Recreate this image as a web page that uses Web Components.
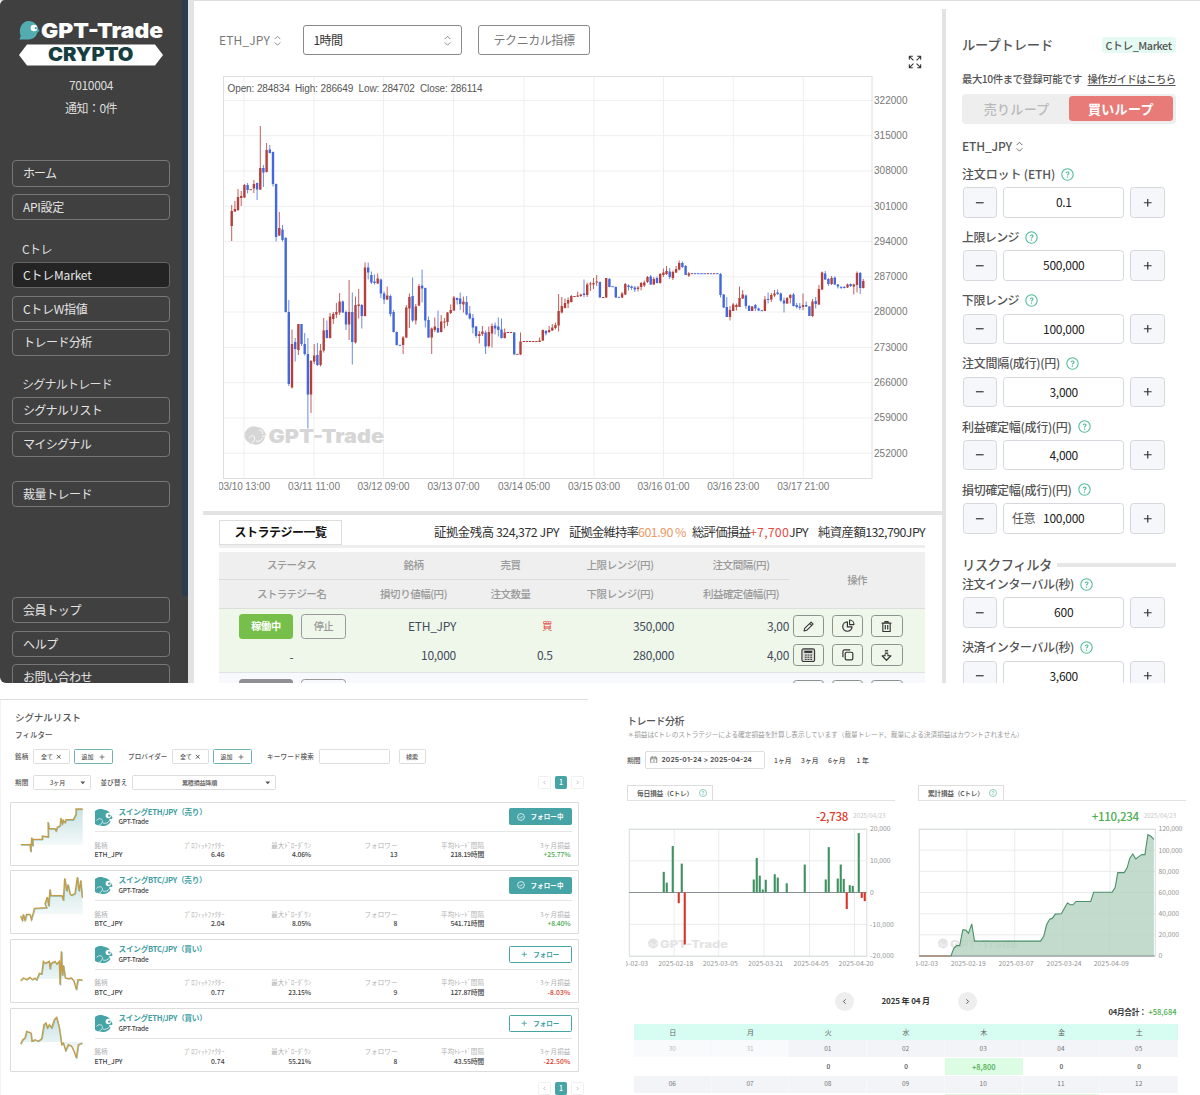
<!DOCTYPE html>
<html lang="ja">
<head>
<meta charset="utf-8">
<title>GPT-Trade CRYPTO</title>
<style>
  html, body { margin: 0; background: #fff; }
  body {
    width: 1200px; height: 1095px; overflow: hidden;
    font-family: "Noto Sans CJK JP", "Noto Sans", sans-serif;
    font-size: 12px; line-height: 1.2; color: #555;
    --teal: #46a3a6; --rule: #e3e3e3; --up: #4cae4f; --down: #dc3a2b;
  }
</style>
</head>
<body>
<gpt-page></gpt-page>

<script>
// ── Base ───────────────────────────────────────────────────────────
class Part extends HTMLElement {
  constructor() {
    super();
    this.attachShadow({ mode: 'open' });
  }
  connectedCallback() {
    this.shadowRoot.innerHTML = `<style>${this.css()}</style>${this.html()}`;
  }
  css() { return ''; }
  html() { return '<slot></slot>'; }
  a(name, fallback = '') { return this.getAttribute(name) ?? fallback; }
}

// ── <fit-text w="80"> · spreads its letters over a given width ──────
class FitText extends Part {
  css() { return ':host { display: inline-block; flex: none; white-space: pre; }'; }
  connectedCallback() {
    super.connectedCallback();
    const w = parseFloat(this.a('w'));
    const n = [...this.textContent].length;
    if (!w || !n) return;
    this.style.letterSpacing = '0';
    const natural = this.getBoundingClientRect().width;
    this.style.letterSpacing = `${((w - natural) / n).toFixed(3)}px`;
  }
}

// ── <gpt-whale> · round brand mark ─────────────────────────────────
class GptWhale extends Part {
  css() { return ':host { display: block; flex: none; } svg { display: block; width: 100%; height: 100%; }'; }
  html() {
    return `<svg viewBox="0 0 20 20">
      <path d="M10 .8a9.200 9.200 0 0 1 7.600 5.700l2 3.500-1.400 1.600A9.200 9.200 0 0 1 7 18.600l-4.800-.8A9.200 9.200 0 0 1 10 .8z" fill="${this.a('color', '#46a3a6')}"/>
      <circle cx="14.800" cy="7.300" r="3" fill="#fff"/><circle cx="15.800" cy="7.300" r="1.300" fill="#46a3a6"/>
      <circle cx="17.300" cy="12.300" r="1.600" fill="#fff"/>
      ${this.hasAttribute('tail') ? `<path d="M1.600 12.800c2-2.600 5.800-2.700 6.600-.2.7 2.400-1.100 4-3.400 5.200M8.800 15.600c2.700.9 5.700-.2 7-2.300" fill="none" stroke="#fff" stroke-width=".8"/>` : ''}
    </svg>`;
  }
}

// ── <gpt-icon name> ────────────────────────────────────────────────
const ICONS = {
  sort: '<path d="M5 6.500 8 3.500l3 3M5 10l3 3 3-3" stroke-width=".9"/>',
  help: '<circle cx="8" cy="8" r="7" stroke-width="1.300"/><path d="M6.300 6.600c0-2.300 3.500-2.300 3.500-.2 0 1.300-1.800 1.300-1.800 2.700" stroke-width="1.300"/><circle cx="8" cy="11.200" r=".5"/>',
  full: '<path d="M1.500 5.500v-4h4M1.500 1.500l4.700 4.700M10.500 1.500h4v4M14.500 1.500 9.800 6.200M1.500 10.500v4h4M1.500 14.500l4.700-4.700M14.500 10.500v4h-4M14.500 14.500l-4.700-4.700" stroke-width="1.200"/>',
  pen: '<path d="m2.500 13.500.8-3.300 7.900-7.700 2.500 2.500-7.900 7.700zM9.400 4.300l2.400 2.400" stroke-width="1.300"/>',
  pie: '<path d="M7.300 3.400A5.300 5.300 0 1 0 12.600 9H7.300z" stroke-width="1.400"/><path d="M9.800 1.200v5.200h5a5.200 5.200 0 0 0-5-5.200z" stroke-width="1.200"/>',
  bin: '<path d="M2 3.800h12M6 3.500V2h4v1.500M3.500 3.800v10.400h9V3.800M6.500 6.200v5.500M9.500 6.200v5.500" stroke-width="1.400"/>',
  calc: '<rect x="1" y="1" width="14" height="14" rx="2" fill="#d4d8d4" stroke-width="1.200"/><rect x="3.600" y="3" width="8.800" height="2.400" fill="currentColor" stroke="none"/><path d="M4.300 7.800h2M7.200 7.800h2M10.200 7.800h2M4.300 10.200h2M7.200 10.200h2M10.200 10.200h2M4.300 12.600h2M7.200 12.600h2M10.200 12.600h2" stroke-width="1.100"/>',
  copy: '<rect x="5" y="5" width="9" height="9" rx="1.500" stroke-width="1.400"/><path d="M11 2.300H4A1.700 1.700 0 0 0 2.300 4v7" stroke-width="1.400"/>',
  down: '<path d="M6.200 6.500v1.800H2.600L8 14l5.400-5.700H9.800V6.500" stroke-width="1.500"/><path d="M6 1.800h4M6 3.700h4M6 5.600h4" stroke-width="1.100"/>',
  check: '<circle cx="8" cy="8" r="6.800" stroke-width="1.500"/><path d="m5 8 2.200 2.300 4-4.200" stroke-width="1.500"/>',
  plus: '<path d="M8 1.500v13M1.500 8h13" stroke-width="2"/>',
  minus: '<path d="M1.500 8h13" stroke-width="2"/>',
  cross: '<path d="m2.500 2.500 11 11M13.500 2.500l-11 11" stroke-width="2.800"/>',
  left: '<path d="m10.500 3-5 5 5 5" stroke-width="1.800"/>',
  right: '<path d="m5.500 3 5 5-5 5" stroke-width="1.800"/>',
  caret: '<path d="M1 4.500h14l-7 8z" fill="currentColor" stroke="none"/>',
  cal: '<rect x="1.500" y="2.500" width="13" height="12.500" rx="1.500" stroke-width="1.400"/><path d="M1.500 6h13M5 .8v3M11 .8v3M8.500 8v5" stroke-width="1.400"/>',
};
class GptIcon extends Part {
  css() {
    const s = this.a('size', 14);
    return `:host { display: block; flex: none; width: ${s}px; height: ${s}px; } svg { display: block; width: 100%; height: 100%; }`;
  }
  html() {
    return `<svg viewBox="0 0 16 16" fill="none" stroke="currentColor" stroke-linejoin="round">${ICONS[this.a('name')]}</svg>`;
  }
}

// ── Sidebar ────────────────────────────────────────────────────────
class NavItem extends Part {
  css() {
    return `
      :host { display: flex; align-items: center; box-sizing: border-box; height: 26.4px; margin: 0 0 7.3px 12px; width: 158px;
        padding-left: 10px; border: 1px solid #777; border-radius: 4px; color: #e4e4e4; font-size: 12px; }
      :host([active]) { background: #242424; border-color: #666; }`;
  }
}
class NavHeading extends Part {
  css() { return ':host { display: flex; align-items: flex-end; height: 28.300px; padding: 0 0 6px 22px; color: #ddd; font-size: 12px; }'; }
}
class GptSidebar extends Part {
  css() {
    return `
      :host { display: flex; width: 188px; flex: none; background: #404040; overflow: hidden; border-radius: 5px 0 0 6px; }
      nav { width: 182px; flex: none; }
      .thumb { width: 6px; height: 596px; background: #2d3b4e; }
      .logo { display: block; width: 182px; height: 50px; padding-top: 18px; }
      .user { box-sizing: border-box; display: flex; flex-direction: column; align-items: center; width: 182px; height: 92.300px; padding-top: 6px; color: #ddd; line-height: 22.800px; }
      .gap { height: 16.400px; } .gap.big { height: 82.200px; }`;
  }
  html() {
    return `<nav>
      <svg class="logo" viewBox="0 18 182 50">
        <path d="M28.500 21c6 0 9 4.500 9.500 7.500l1.500 2.300-2 1.800c-1.500 5-6 7.400-10 6.800l-8 .1 1.200-3.500C18 28 22.500 21 28.500 21z" fill="#52acb0"/>
        <circle cx="34" cy="28" r="3.300" fill="#fff"/><circle cx="35.800" cy="28.200" r="1.100" fill="#46a3a6"/>
        <text x="41" y="38" font-family="Inter, sans-serif" font-weight="900" font-size="20.800" fill="#fff" textLength="122" lengthAdjust="spacingAndGlyphs">GPT-Trade</text>
        <path d="M27 44.500h128l8 10.500-8 10.500H27L19 55z" fill="#fff"/>
        <text x="48" y="61" font-family="Inter, sans-serif" font-weight="900" font-size="18.500" fill="#173f42" textLength="85.500" lengthAdjust="spacingAndGlyphs">CRYPTO</text>
      </svg>
      <div class="user"><fit-text w="44">7010004</fit-text><fit-text w="52">通知：0件</fit-text></div>
      <nav-item><fit-text w="33">ホーム</fit-text></nav-item>
      <nav-item><fit-text w="41">API設定</fit-text></nav-item>
      <nav-heading><fit-text w="30">Cトレ</fit-text></nav-heading>
      <nav-item active><fit-text w="68.500">CトレMarket</fit-text></nav-item>
      <nav-item><fit-text w="64.500">CトレW指値</fit-text></nav-item>
      <nav-item><fit-text w="69">トレード分析</fit-text></nav-item>
      <nav-heading><fit-text w="90">シグナルトレード</fit-text></nav-heading>
      <nav-item><fit-text w="79">シグナルリスト</fit-text></nav-item>
      <nav-item><fit-text w="68">マイシグナル</fit-text></nav-item>
      <div class="gap"></div>
      <nav-item><fit-text w="69">裁量トレード</fit-text></nav-item>
      <div class="gap big"></div>
      <nav-item><fit-text w="58">会員トップ</fit-text></nav-item>
      <nav-item><fit-text w="35">ヘルプ</fit-text></nav-item>
      <nav-item><fit-text w="69">お問い合わせ</fit-text></nav-item>
    </nav><div class="thumb"></div>`;
  }
}

// ── <candle-chart> ─────────────────────────────────────────────────
// One candle per hour: side, high, body top, body bottom, low. A side with a
// single number is a flat hour.
const CANDLES = `r 205 211 226 241|r 201 209 211.5 212|r 189 197 210 211|r 191 196 198 206|r 184 185 197.5 198|b 183 185 190 193.5|r 189.700|r 180 184 188.5 193|b 182.5 183 189.5 200|r 126 168 189.5 190|b 165 168 172.5 187|r 143 150 172 172.5|b 145 149.5 153 153.5|b 151.5 152 184 186.5|b 183.5 184 237 241.5|r 212 228 235.5 236|b 225 229.5 240 241.5|b 237 238 312 312.5|b 300 312 384 386|r 329.5 344 387.5 388.5|b 338 342 349 361.5|r 324 324 350 355|b 324 324 344 346|b 333 344 354 355.5|b 338 354 394.5 428.5|r 360 361 394.5 413|r 344 355.5 361.5 364|b 343 355 365 366|r 344 350.5 365 366.5|r 318 330.5 350.5 352.5|b 320.5 330 338 338.5|r 313 316.5 338 338.5|r 312 314 319 324|r 303 312 314.5 318|r 293 301.5 312.5 315|b 300.5 301.5 312.5 313|b 310.5 312 324.5 330|r 280 312 324.5 340|b 292.5 312 342 364.5|r 296.5 305 342.5 343.5|r 289 304.5 306 318.5|b 304 305 316 328.5|r 262.5 267.5 316 316.5|b 262.5 267.5 272.5 279.5|b 271.5 275 282.5 284|b 274.5 281.5 283 284.5|r 273.5 278.5 283.5 284|b 278.5 279.5 293.5 298|b 291.5 293.5 299.5 304|r 286.5 295.5 299.5 300|b 294.5 296 314 316.5|b 310 312 332 332.5|b 331.5 332 345 345.5|b 345.300|r 336 337.5 345 354|r 305 307.5 337.5 338|r 293.5 297 308.5 328|b 277.5 296 320.5 322|r 304 306.5 320.5 324.5|r 284 286 305.5 306|b 269.5 285.5 288.5 302.5|b 287.5 288 320.5 327.5|b 316.5 320 337.5 338|r 327.5 328.5 337.5 354|r 317.5 326.5 330 332|b 310.5 328 332.5 332.5|r 315 321.5 332 332.5|r 318 321.5 322.5 328.5|r 312 312.5 322 326|r 304.5 310 313 314|r 296 297.5 310.5 311|b 297.5 298 300 304.5|b 292.5 298.5 304 310|r 296.5 301.5 304.5 312.5|b 296 302 314.5 315.5|b 306 313.5 318.5 319.5|b 314 318 327.5 333.5|b 326 326.5 336 338|r 331 334 336 343.5|r 326 331.5 334 336|b 330.5 332.5 346.5 354|r 326.5 332 346 347.5|r 323.5 326 333.5 347.5|b 322.5 325.5 328.5 334.5|b 317.5 326.5 330 336.5|b 318.5 329.5 338 338.5|r 328.5 332.5 338 338.5|r 332.500|r 332.500|b 332 332.5 354.5 354.5|r 354.300|r 332.5 341.5 354.5 355|r 341.500|r 341.500|r 341.500|r 341.500|r 341.500|r 337.5 340.5 342 342|r 329.5 330 340.5 341|b 330 331 333.5 335.5|r 326 330 332 333|r 324 327.5 330.5 331|r 322.5 325 328 329.5|r 294 311 325.5 331.5|r 297 306 312.5 313.5|r 298.5 303 308 308.5|r 297.5 300 303.5 308|r 295 296 302 302.5|r 296.500|r 291.5 295.5 296.7 297|r 293.5 294.7 296 297|b 279.5 293.5 295 297.5|r 282.5 284.5 295 297|r 282 283.5 284.5 291|r 278 283 284.5 289|r 275 281.5 282.5 286|b 281.5 282 297.5 297.5|r 297.500|r 278 278 297.5 297.5|b 278 279 287 287.3|b 286.700|b 286.5 287 297.5 297.7|b 297.300|r 292 293.5 297.5 298|r 283 284 294.5 295|b 284.5 285.5 287 290.5|b 285.5 286.5 288 290|b 286 287.5 289.5 292|r 286 287.5 289 291.5|r 282 283 287 290.5|r 280.5 282.5 285.5 287|r 276 277 282 283|b 275 276.5 284.5 285|r 277 279 284.5 285|b 276.5 278 283 283.5|r 273 274 283 283.5|r 268.5 272.5 275 277|r 266 271 274 275|b 268 271.5 277 279|r 270.5 272 278 280|r 266 269 272.5 273|r 260.5 263 269.5 270.5|b 261.5 263 267 268|b 265 266 275 275|r 272 273.5 275.5 277|r 273.700|b 273.700|b 273.700|b 273.700|b 273.700|r 273.700|b 273.700|r 273.700|b 273.700|b 273 274 295 297.5|b 294 294.5 307.5 308|b 297 307 317 317|r 306 310 317 320.5|r 303 304.5 311 311|r 303.5 305 307 310.5|r 286.5 298 307 307|r 290 294.5 298.5 299|b 294.5 295.5 306 309|b 305 306 311 311|r 306 306.5 311 311|b 304 305 308.5 311|b 307.5 308.5 310.5 311|b 310.700|r 296 299.5 311 311|b 292.5 299 300 303.5|r 293 295 299.5 302|r 290 293.5 295.5 297|b 289.5 292.5 294 295|b 292.5 293.5 300.5 302|b 297.5 300.5 303.5 312.5|r 297 298 303.5 304|r 294 295 298 303.5|b 293 294.5 306 306.5|b 303 305 307 308.5|b 303 306.5 308 310|r 293.5 305 307 310|b 301.5 305 306.5 307|b 306 306.5 316 316|r 299 301.5 316 317|b 297 301 304 308.5|r 285 289 304.5 305|r 271.5 272.5 289.5 290|b 271 273.5 279.5 280|b 278 279 284 286|r 276 278 284 285|b 276.5 277.5 284.5 285|b 284 284.5 286.5 288.5|b 286.5 286.8 287.6 289|b 286 287 288 288.5|r 283.5 284.5 287.5 288|b 283.5 284 286 287|r 283.5 284.5 286.5 294.5|r 271.5 273 285 292.5|b 272 273 288 294|r 279 281 288 288.5`;

class CandleChart extends Part {
  css() {
    return `:host { display: block; width: 748px; height: 436px; }
      svg { display: block; }
      text { font-family: "Liberation Sans", Arial, sans-serif; font-size: 10px; fill: #777; }
      .ohlc { font-size: 10px; fill: #555; }
      .mark { font-family: Inter, sans-serif; font-weight: 900; font-size: 19px; fill: #d6d6d6; }`;
  }
  html() {
    const rows = CANDLES.split('|').map((c, i) => {
      const [side, ...v] = c.split(' ');
      const [hi, top, bottom, lo] = v.length === 1 ? [+v[0], v[0] - 0.5, +v[0] + 0.5, +v[0]] : v.map(Number);
      const x = 231.7 + i * 3.174;
      const [wick, fill] = side === 'r' ? ['#c0605c', '#b3403b'] : ['#6b8ae6', '#4468dc'];
      return `<path d="M${x.toFixed(1)} ${hi}V${lo}" stroke="${wick}"/><rect x="${(x - 1.2).toFixed(1)}" y="${top}" width="2.4" height="${Math.max(1, bottom - top)}" fill="${fill}"/>`;
    }).join('');
    const xs = [244, 314, 383.5, 453.5, 524, 594, 663.5, 733.3, 803.3];
    const days = ['03/10 13:00', '03/11 11:00', '03/12 09:00', '03/13 07:00', '03/14 05:00', '03/15 03:00', '03/16 01:00', '03/16 23:00', '03/17 21:00'];
    const xGrid = xs.map((x, i) => `<path d="M${x} 76V478.500" stroke="#efefef"/><text x="${x - 26}" y="489.500" textLength="52" ${i ? '' : 'clip-path="url(#axis)"'}>${days[i]}</text>`).join('');
    const yGrid = Array.from({ length: 11 }, (_, i) => {
      const y = 100.4 + i * 35.28;
      return `<path d="M223.500 ${y}H872" stroke="#efefef"/><text x="874" y="${y + 3.3}" textLength="33.500">${322000 - i * 7000}</text>`;
    }).join('');
    return `<svg width="748" height="436" viewBox="194 70 748 436">
      <defs><clipPath id="axis"><path d="M219 478h60v20h-60z"/></clipPath></defs>
      ${xGrid}${yGrid}
      <rect x="223.500" y="76.500" width="648.500" height="402" fill="none" stroke="#dedede"/>
      <path d="M257 427a8.800 8.800 0 0 1 8 5.500l1.500 2.500-1.500 2a8.800 8.800 0 0 1-10.500 7.500l-4.500-1a8.800 8.800 0 0 1 7-16.500z" fill="#d6d6d6"/>
      <path d="M249 438c2-3 5-3 5.500-.5s-1 4-2.500 5.500M256 441c3 1 5-.5 6.500-3M259 430.500c2-1.500 5 1 3 3.500M262 436.500l4-1" fill="none" stroke="#fff" stroke-width=".9"/>
      <text class="mark" x="268.500" y="442.500" textLength="115.500" lengthAdjust="spacingAndGlyphs">GPT-Trade</text>
      <text class="ohlc" xml:space="preserve" x="227.500" y="92" textLength="255">Open: 284834&#160; High: 286649&#160; Low: 284702&#160; Close: 286114</text>
      ${rows}
    </svg>`;
  }
}

class ChartBar extends Part {
  css() {
    return `:host { display: flex; align-items: center; height: 29px; padding: 25.500px 0 0 25px; position: relative; color: #777; font-size: 12px; }
      gpt-icon { color: #777; }
      .pair { display: flex; align-items: center; width: 84px; }
      .pair, .box { box-sizing: border-box; }
      .box { display: flex; align-items: center; height: 29.500px; border: 1px solid #8a8a8a; border-radius: 3px; }
      .tf { width: 158.500px; padding: 0 6px 0 9.500px; justify-content: space-between; color: #333; margin-right: 16.500px; }
      .ti { width: 112px; justify-content: center; }
      .full { position: absolute; left: 714px; top: 55px; color: #333; }`;
  }
  html() {
    return `<div class="pair"><fit-text w="51">ETH_JPY</fit-text><gpt-icon name="sort" size="15"></gpt-icon></div>
      <div class="box tf"><fit-text w="29">1時間</fit-text><gpt-icon name="sort" size="15"></gpt-icon></div>
      <div class="box ti"><fit-text w="81">テクニカル指標</fit-text></div>
      <gpt-icon class="full" name="full" size="14"></gpt-icon>`;
  }
}

// ── Strategy table ─────────────────────────────────────────────────
class IconButton extends Part {
  css() {
    return `:host { display: flex; align-items: center; justify-content: center; box-sizing: border-box; width: 31.200px; height: 22px;
      border: 1px solid #8b928b; border-radius: 3.500px; color: #333; }`;
  }
  html() { return `<gpt-icon name="${this.a('name')}" size="${this.a('size', 13)}"></gpt-icon>`; }
}
class StrategyList extends Part {
  css() {
    return `
      :host { display: block; box-sizing: border-box; padding: 4.500px 17px 0 16px; height: 172px; overflow: hidden; margin-left: 9px; border-top: 4px solid var(--rule); }
      .bar { display: flex; align-items: center; height: 25px; color: #333; font-size: 12.400px; border-bottom: 3.500px solid #eee; }
      .tab { box-sizing: border-box; width: 123px; height: 25px; border: 1px solid #ddd; display: flex; align-items: center; justify-content: center; font-size: 12px; font-weight: 700; color: #111; background: #fff; }
      .stats { display: flex; margin-left: auto; }
      .gap { margin-left: 10px; }
      .warn { color: #ea9a66; } .red { color: #e34a43; }
      .grid { display: grid; grid-template-columns: 145px 99px 95px 135px 96px 136px; }
      .head { margin-top: 4px; background: #efefef; color: #999; font-size: 10.500px; font-weight: 500; grid-template-rows: 28.500px 28.500px; border-bottom: 1px solid #ddd; height: 57px; box-sizing: border-box; }
      .head > * { display: flex; align-items: center; justify-content: center; }
      .head > .l { border-bottom: 1px solid #dcdcdc; }
      .head > .c4 { padding-right: 11px; }
      .ops { grid-column: 6; grid-row: 1 / 3; }
      .row { box-sizing: border-box; height: 64px; background: #eff7ea; border-bottom: 1px solid #dde3e0; grid-template-rows: 29px 29px; padding-top: 3px; color: #444b5c; font-size: 12px; }
      .row > * { display: flex; align-items: center; justify-content: flex-end; }
      .row > .c2 { padding-right: 7px; } .row > .c3 { padding-right: 5.500px; } .row > .c4 { padding-right: 19px; }
      .row > .st { justify-content: flex-start; padding-left: 20px; gap: 8px; }
      .row > .nm { justify-content: center; padding-top: 4px; }
      .on, .off { display: flex; align-items: center; justify-content: center; box-sizing: border-box; height: 25px; border-radius: 3.500px; font-size: 10.200px; font-weight: 700; }
      .on { width: 54px; background: #77bf4b; color: #fff; } .off { width: 45px; border: 1px solid #999; color: #999; font-weight: 500; }
      .row > .act { justify-content: flex-start; padding-left: 4px; gap: 8px; }
      .row.next { background: #f7f9fc; height: 40px; padding-top: 4px; }
      .next .on { background: #8f8f94; }`;
  }
  html() {
    const h = (cls, w, t) => `<div class="${cls}"><fit-text w="${w}">${t}</fit-text></div>`;
    return `
      <div class="bar"><div class="tab"><fit-text w="92">ストラテジー一覧</fit-text></div>
        <div class="stats"><fit-text w="125">証拠金残高 324,372 JPY</fit-text>
          <fit-text class="gap" w="69">証拠金維持率</fit-text><fit-text class="warn" w="48">601.90 %</fit-text>
          <fit-text style="margin-left:6px" w="58">総評価損益</fit-text><fit-text class="red" w="39">+7,700</fit-text><fit-text w="19">JPY</fit-text>
          <fit-text class="gap" w="107">純資産額132,790JPY</fit-text></div></div>
      <div class="grid head">
        ${h('l', 49, 'ステータス')}${h('l', 20, '銘柄')}${h('l', 20, '売買')}${h('l c4', 67, '上限レンジ(円)')}${h('l', 57, '注文間隔(円)')}
        <div class="ops"><fit-text w="19.500">操作</fit-text></div>
        ${h('', 69, 'ストラテジー名')}${h('', 67, '損切り値幅(円)')}${h('', 40, '注文数量')}${h('c4', 67, '下限レンジ(円)')}${h('', 76, '利益確定値幅(円)')}
      </div>
      <div class="grid row">
        <div class="st"><span class="on"><fit-text w="29.500">稼働中</fit-text></span><span class="off"><fit-text w="19.500">停止</fit-text></span></div>
        <div class="c2"><fit-text w="48">ETH_JPY</fit-text></div><div class="c3 red" style="font-size:10.500px">買</div><div class="c4"><fit-text w="41">350,000</fit-text></div><div><fit-text w="22">3,00</fit-text></div>
        <div class="act"><icon-button name="pen"></icon-button><icon-button name="pie" size="14"></icon-button><icon-button name="bin"></icon-button></div>
        <div class="nm">-</div><div class="c2"><fit-text w="35">10,000</fit-text></div><div class="c3"><fit-text w="15.500">0.5</fit-text></div><div class="c4"><fit-text w="41">280,000</fit-text></div><div><fit-text w="22">4,00</fit-text></div>
        <div class="act"><icon-button name="calc" size="14.500"></icon-button><icon-button name="copy" size="13.500"></icon-button><icon-button name="down" size="13"></icon-button></div>
      </div>
      <div class="grid row next">
        <div class="st"><span class="on"></span><span class="off"></span></div><div></div><div></div><div></div><div></div>
        <div class="act"><icon-button name="pen"></icon-button><icon-button name="pie"></icon-button><icon-button name="bin"></icon-button></div>
      </div>`;
  }
}

// ── Loop trade form ────────────────────────────────────────────────
class StepField extends Part {
  css() {
    return `
      :host { display: block; box-sizing: border-box; height: 63.200px; padding-top: 9.500px; color: #555; }
      .label { display: flex; align-items: center; gap: 6px; height: 20px; font-weight: 500; font-size: 12px; }
      gpt-icon { color: #4fbb95; }
      .line { display: flex; gap: 5.500px; margin-top: 3.300px; padding-left: .7px; }
      .b, .v { box-sizing: border-box; height: 30.400px; border: 1px solid #d5d7dc; border-radius: 3.500px; display: flex; align-items: center; justify-content: center; }
      .b { width: 34.800px; background: #f5f7fb; } .b gpt-icon { color: #333; }
      .v { width: 121.500px; position: relative; color: #222; font-size: 12px; background: #fff; }
      .hint { position: absolute; left: 8px; top: 6.500px; color: #555; }`;
  }
  html() {
    return `<div class="label"><fit-text w="${this.a('lw')}">${this.a('label')}</fit-text><gpt-icon name="help" size="13"></gpt-icon></div>
      <div class="line"><div class="b"><gpt-icon name="minus" size="9.500"></gpt-icon></div>
      <div class="v">${this.a('hint') ? `<fit-text class="hint" w="23">${this.a('hint')}</fit-text>` : ''}<fit-text w="${this.a('vw')}">${this.a('value')}</fit-text></div>
      <div class="b"><gpt-icon name="plus" size="9.500"></gpt-icon></div></div>`;
  }
}
class LoopForm extends Part {
  css() {
    return `
      :host { display: block; box-sizing: border-box; flex: none; width: 258px; height: 674px; overflow: hidden; margin-top: 9px; border-left: 4px solid var(--rule); padding: 24px 24.500px 0 16px; color: #555; }
      .top, .note, .pair, .risk { display: flex; align-items: center; justify-content: space-between; }
      .top { height: 24px; font-size: 13.300px; font-weight: 500; }
      .badge { background: #e5faf2; border-radius: 3px; height: 16px; width: 74px; display: flex; align-items: center; justify-content: center; font-size: 10.800px; }
      .note { height: 16px; margin-top: 14px; font-size: 10.300px; font-weight: 500; }
      u { text-underline-offset: 2px; }
      .seg { display: flex; box-sizing: border-box; height: 30px; margin-top: 6.500px; width: 213.500px; padding: 2.500px; background: #eee; border-radius: 4px; font-size: 13px; font-weight: 500; color: #b9b9b9; }
      .seg div { flex: 1; display: flex; align-items: center; justify-content: center; border-radius: 3.500px; }
      .seg .buy { background: #e87b78; color: #fff; font-weight: 700; }
      .pair { height: 20px; margin-top: 13px; justify-content: flex-start; font-weight: 500; }
      step-field:first-of-type { margin-top: -2px; }
      .risk { height: 20px; margin: 21.500px 0 -10.500px; font-size: 13.300px; font-weight: 500; position: relative; }
      .risk i { width: 119px; height: 4px; background: #e6e6e6; }`;
  }
  html() {
    return `
      <div class="top"><fit-text w="91">ループトレード</fit-text><span class="badge"><fit-text w="66">Cトレ_Market</fit-text></span></div>
      <div class="note"><fit-text w="120">最大10件まで登録可能です</fit-text><u><fit-text w="88" style="text-decoration:underline">操作ガイドはこちら</fit-text></u></div>
      <div class="seg"><div><fit-text w="66">売りループ</fit-text></div><div class="buy"><fit-text w="66">買いループ</fit-text></div></div>
      <div class="pair"><fit-text w="50">ETH_JPY</fit-text><gpt-icon name="sort" size="15"></gpt-icon></div>
      <step-field label="注文ロット (ETH)" lw="93" value="0.1" vw="15.500"></step-field>
      <step-field label="上限レンジ" lw="57" value="500,000" vw="41.500"></step-field>
      <step-field label="下限レンジ" lw="57" value="100,000" vw="41.500"></step-field>
      <step-field label="注文間隔(成行)(円)" lw="98" value="3,000" vw="28.500"></step-field>
      <step-field label="利益確定幅(成行)(円)" lw="109.500" value="4,000" vw="28.500"></step-field>
      <step-field label="損切確定幅(成行)(円)" lw="109.500" value="100,000" vw="41.500" hint="任意"></step-field>
      <div class="risk"><fit-text w="90">リスクフィルタ</fit-text><i></i></div>
      <step-field label="注文インターバル(秒)" lw="112" value="600" vw="19.500"></step-field>
      <step-field label="決済インターバル(秒)" lw="112" value="3,600" vw="28.500"></step-field>`;
  }
}

// ── Signal list ────────────────────────────────────────────────────
class PageNav extends Part {
  css() {
    return `:host { display: flex; gap: 4px; height: 13px; color: #999; font-size: 7px; }
      div { box-sizing: border-box; width: 12.700px; height: 13px; display: flex; align-items: center; justify-content: center; border: 1px solid #f0f0f0; border-radius: 1.500px; }
      .on { background: var(--teal); border-color: var(--teal); color: #fff; }`;
  }
  html() { return '<div><gpt-icon name="left" size="5"></gpt-icon></div><div class="on">1</div><div><gpt-icon name="right" size="5"></gpt-icon></div>'; }
}
class SignalCard extends Part {
  css() {
    return `
      :host { display: flex; box-sizing: border-box; width: 568.500px; height: 64px; margin-bottom: 4.900px; border: 1.500px solid #dcdcdc; border-radius: 1px; padding: 4px 6px 0 8.500px; font-size: 6.500px; color: #444; line-height: 9px; }
      .spark { display: block; width: 63px; height: 56px; flex: none; margin-right: 12px; margin-top: -1.500px; }
      .main { flex: 1; }
      .top { display: flex; height: 25.500px; box-sizing: border-box; border-bottom: 1px solid #e6e6e6; }
      gpt-whale { width: 18px; height: 18px; margin: 2px 6px 0 0; }
      .name { display: flex; flex-direction: column; align-items: flex-start; flex: 1; font-weight: 500; gap: 1.500px; }
      .name > :first-child { color: #3e9ea2; font-size: 7.600px; font-weight: 700; }
      .btn { display: flex; align-items: center; justify-content: center; gap: 5.500px; box-sizing: border-box; width: 62.500px; height: 17.200px; margin-top: 1.500px; border: 1px solid var(--teal); border-radius: 1.500px; color: #3e9ea2; font-weight: 700; }
      .btn.on { background: var(--teal); color: #fff; }
      .cols { display: grid; grid-template-columns: 43.500px 86.500px 86.500px 86.500px 86.500px 86.500px; padding-top: 8.700px; }
      .cols div { display: flex; flex-direction: column; align-items: flex-end; line-height: 9.500px; font-weight: 500; font-size: 6.800px; }
      .cols div:first-child { align-items: flex-start; }
      .cols span { color: #b0b0b0; font-weight: 400; font-size: 6.500px; }
      .pos { color: var(--up); } .neg { color: var(--down); }`;
  }
  html() {
    const on = this.hasAttribute('following');
    const [sym, pf, dd, fol, gap, pl] = this.a('values').split(' ');
    const pts = this.a('spark');
    const base = this.a('base', 119);
    const fw = fol.length > 1 ? 7.5 : 4;
    return `
      <svg class="spark" viewBox="0 0 189 168">
        <defs><linearGradient id="g" x1="0" y1="0" x2="0" y2="1"><stop stop-color="#3d9aa0" stop-opacity=".28"/><stop offset="1" stop-color="#3d9aa0" stop-opacity=".02"/></linearGradient></defs>
        <path d="M2 ${base}L${pts}L188 ${base}z" fill="url(#g)"/>
        <polyline points="${pts}" fill="none" stroke="#4aa5a0" stroke-width="3" transform="translate(2 2)" opacity=".55"/>
        <polyline points="${pts}" fill="none" stroke="#c49c48" stroke-width="4"/>
      </svg>
      <div class="main">
        <div class="top"><gpt-whale tail></gpt-whale>
          <div class="name"><fit-text w="88">${this.a('name')}</fit-text><fit-text w="30">GPT-Trade</fit-text></div>
          ${on ? '<div class="btn on"><gpt-icon name="check" size="8"></gpt-icon><fit-text w="33">フォロー中</fit-text></div>' : '<div class="btn"><gpt-icon name="plus" size="6.500"></gpt-icon><fit-text w="26">フォロー</fit-text></div>'}
        </div>
        <div class="cols">
          <div><span>銘柄</span><fit-text w="28">${sym}</fit-text></div>
          <div><span><fit-text w="40">ﾌﾟﾛﾌｨｯﾄﾌｧｸﾀｰ</fit-text></span><fit-text w="13.500">${pf}</fit-text></div>
          <div><span><fit-text w="40">最大ﾄﾞﾛｰﾀﾞｳﾝ</fit-text></span><fit-text w="${dd.length * 3.8}">${dd}</fit-text></div>
          <div><span><fit-text w="33">フォロワー</fit-text></span><fit-text w="${fw}">${fol}</fit-text></div>
          <div><span><fit-text w="43">平均ﾄﾚｰﾄﾞ間隔</fit-text></span><fit-text w="${gap.length > 7 ? 33.5 : 30}">${gap}</fit-text></div>
          <div><span><fit-text w="30.500">3ヶ月損益</fit-text></span><fit-text class="${pl[0] === '+' ? 'pos' : 'neg'}" w="${pl.length > 6 ? 27 : 23}">${pl}</fit-text></div>
        </div>
      </div>`;
  }
}
class SignalList extends Part {
  css() {
    return `
      :host { display: block; box-sizing: border-box; width: 588px; height: 396px; flex: none; border-top: 1px solid #ddd; border-left: 1px solid #f3f3f3; padding: 9px 4px 0 9px; font-size: 6.500px; font-weight: 500; color: #555; }
      h2, h3 { margin: 0 0 0 5px; font-weight: 500; }
      h2 { font-size: 9.500px; line-height: 16px; } h3 { font-size: 7.500px; line-height: 20px; }
      .row { display: flex; align-items: center; height: 15px; padding-left: 5px; }
      .r1 { margin-top: 4px; } .r2 { margin-top: 11px; margin-bottom: 11.500px; }
      .box { display: flex; align-items: center; justify-content: center; gap: 3px; box-sizing: border-box; height: 15px; border: 1px solid #ddd; border-radius: 1.500px; margin-left: 4.500px; position: relative; }
      .add { border-color: #6fb3b6; gap: 6px; }
      .box fit-text { font-size: 6px; }
      .lab { margin-left: 15px; } .box gpt-icon.c { position: absolute; right: 4.500px; top: 4px; }
      page-nav { margin-left: auto; }
      .foot { display: flex; margin-top: 9.500px; }`;
  }
  html() {
    return `
      <h2><fit-text w="66">シグナルリスト</fit-text></h2><h3><fit-text w="37.500">フィルター</fit-text></h3>
      <div class="row r1"><fit-text w="13.500">銘柄</fit-text>
        <div class="box" style="width:36.500px"><fit-text w="12">全て</fit-text><gpt-icon name="cross" size="5.500"></gpt-icon></div>
        <div class="box add" style="width:39px"><fit-text w="12">追加</fit-text><gpt-icon name="plus" size="6"></gpt-icon></div>
        <fit-text class="lab" w="39.500">プロバイダー</fit-text>
        <div class="box" style="width:36.500px"><fit-text w="12">全て</fit-text><gpt-icon name="cross" size="5.500"></gpt-icon></div>
        <div class="box add" style="width:39px"><fit-text w="12">追加</fit-text><gpt-icon name="plus" size="6"></gpt-icon></div>
        <fit-text class="lab" w="47">キーワード検索</fit-text>
        <div class="box" style="width:71px"></div>
        <div class="box" style="width:27px;margin-left:9px"><fit-text w="12">検索</fit-text></div></div>
      <div class="row r2"><fit-text w="13.500">期間</fit-text>
        <div class="box" style="width:58px"><fit-text w="15" style="margin-right:9px">3ヶ月</fit-text><gpt-icon class="c" name="caret" size="5.500"></gpt-icon></div>
        <fit-text style="margin-left:9.500px" w="27">並び替え</fit-text>
        <div class="box" style="width:144px"><fit-text w="35" style="margin-right:9px">累積損益降順</fit-text><gpt-icon class="c" name="caret" size="5.500"></gpt-icon></div>
        <page-nav></page-nav></div>
      <signal-card following name="スイングETH/JPY（売り）" values="ETH_JPY 6.46 4.06% 13 218.19時間 +25.77%" base="119"
        spark="2,119 30,119 32,140 35,98 38,123 38,103 67,103 67,93 85,96 84,51 87,71 105,71 108,78 112,66 120,63 123,39 127,56 130,46 135,53 138,44 160,44 168,28 168,12 188,12"></signal-card>
      <signal-card following name="スイングBTC/JPY（売り）" values="BTC_JPY 2.04 8.05% 8 541.71時間 +8.40%" base="121"
        spark="2,126 7,139 10,121 15,139 20,121 30,121 34,137 40,116 43,103 80,101 75,89 82,69 86,96 90,46 92,65 126,65 130,79 134,13 140,51 144,31 150,59 154,64 165,59 172,9 177,51 182,19 187,71"></signal-card>
      <signal-card name="スイングBTC/JPY（買い）" values="BTC_JPY 0.77 23.15% 9 127.87時間 -8.03%" base="108"
        spark="2,113 10,105 20,110 30,103 37,110 45,105 50,111 58,91 65,93 70,55 75,61 88,55 90,78 93,61 105,55 110,63 118,55 120,125 124,25 127,97 130,67 136,105 145,107 155,105 162,115 169,140 174,110 187,111"></signal-card>
      <signal-card name="スイングETH/JPY（買い）" values="ETH_JPY 0.74 55.21% 8 43.55時間 -22.50%" base="90"
        spark="2,96 8,83 15,78 20,58 33,63 36,88 45,83 55,88 65,80 72,38 78,33 82,48 88,38 95,48 103,23 110,16 118,48 125,98 130,93 137,116 145,98 155,103 162,118 169,138 175,98 187,93"></signal-card>
      <div class="foot"><page-nav></page-nav></div>`;
  }
}

// ── Trade analysis ─────────────────────────────────────────────────
const DAILY = [[11, 6500], [12, 3100], [14, 14650], [16, -3350], [17, 9100], [18, -16400], [41, 4100], [42, 10900], [43, 5300], [44, 950], [45, 4000], [48, 5750], [49, 4700], [52, 2900], [58, 8800], [65, 4100], [66, 14300], [69, 4400], [70, 8800], [71, 4300], [72, -5200], [73, 2300], [74, 2100], [76, 18700], [77, -1700], [78, -2738]];
// x offset on the plot, running total in thousands
const TOTAL = [[0, 0], [31.5, 0], [34.2, 7], [37, 9.8], [40.2, 9.8], [43.3, 24.8], [46.3, 24.5], [49, 21.6], [52.3, 30.2], [55, 14.1], [121.1, 14.1], [124.2, 18.5], [127.2, 29.8], [130.2, 34.9], [132.8, 35.5], [135.8, 39.6], [141.8, 39.9], [147.9, 50], [150.9, 48.4], [153.5, 48.4], [156.5, 51.5], [171.2, 51.5], [174.2, 60.3], [192.6, 60.3], [195.6, 64.7], [198.3, 78.8], [204.7, 78.8], [207.7, 83.5], [210.3, 92.4], [213.3, 96.4], [216.3, 91.7], [219.3, 93.9], [222.4, 95.8], [225.4, 95.8], [228.4, 114.7], [231.4, 113.1], [234.4, 110.234]];

class MiniChart extends Part {
  css() {
    return `:host { display: block; } svg { display: block; }
      text { font-size: 6.800px; fill: #949494; }
      .mark { font-family: Inter, sans-serif; font-weight: 800; font-size: 11px; fill: #e3e3e3; }`;
  }
  html() {
    const bars = this.a('kind') === 'bars';
    const W = bars ? 237.5 : 236;
    const grid = bars ? [45.2, 89.7, 135, 180.5, 225.5] : [47.9, 95.7, 143.8, 191];
    const off = bars ? 1.6 : 1.3;
    const days = bars ? ['2025-02-18', '2025-03-05', '2025-03-21', '2025-04-05', '2025-04-20'] : ['2025-02-19', '2025-03-07', '2025-03-24', '2025-04-09'];
    const ticks = bars ? ['20,000', '10,000', '0', '-10,000', '-20,000'] : ['120,000', '100,000', '80,000', '60,000', '40,000', '20,000', '0'];
    const step = 127 / (ticks.length - 1);
    const path = TOTAL.map(([x, v]) => `${x + 0.5} ${(127 - v * 127 / 120).toFixed(1)}`).join('L');
    const body = bars
      ? `<path d="M0 63.500H${W}" stroke="#8a9096"/>` + DAILY.map(([i, v]) => {
          const h = Math.abs(v) * 63.5 / 20000;
          return `<rect x="${((i + 0.5) * 3 - 1 + 0.2).toFixed(1)}" y="${v > 0 ? 63.5 - h : 63.5}" width="2.1" height="${h}" fill="${v > 0 ? '#3f9160' : '#d9342a'}"/>`;
        }).join('')
      : `<path d="M${path}V127H0z" fill="#b2d1be" fill-opacity=".78"/><path d="M0 127H235.500" stroke="#8a9096"/><path d="M${path}" fill="none" stroke="#4a9069" stroke-width="1.100"/><path d="M0 127H31.500" stroke="#dc8d80"/>`;
    return `<svg width="272" height="146" viewBox="-3 -5 272 146">
      <defs><clipPath id="cut"><path d="M-3 125h60v16h-60z"/></clipPath></defs>
      ${grid.map((x, i) => `<path d="M${x} 0V127" stroke="#e9ecee"/><text x="${x + off}" y="136.500" text-anchor="middle" textLength="35">${days[i]}</text>`).join('')}
      ${ticks.map((t, i) => `<path d="M0 ${(i * step).toFixed(1)}H${W}" stroke="#e9ecee"/><text x="${W + 3.5}" y="${(i * step + 2.3).toFixed(1)}" ${t.length > 1 ? `textLength="${(t.length * 3.42).toFixed(1)}"` : ''}>${t}</text>`).join('')}
      <text x="-16" y="136.500" textLength="35" clip-path="url(#cut)">2025-02-03</text>
      <rect x=".3" y=".3" width="${W}" height="127" fill="none" stroke="#d9dcde"/>
      <circle cx="24" cy="114.500" r="5" fill="#e3e3e3"/><path d="M20 116c1-2 3-2 3 0s-1 2-2 3M24 116c2 1 3 0 4-2" fill="none" stroke="#fff" stroke-width=".7"/>
      <text class="mark" x="31" y="118.500" textLength="68" lengthAdjust="spacingAndGlyphs">GPT-Trade</text>
      ${body}</svg>`;
  }
}
class ProfitPanel extends Part {
  css() {
    return `:host { display: block; width: 268px; }
      .bar { height: 15px; border-bottom: 1.500px solid #e2e2e2; }
      .tab { display: flex; align-items: center; box-sizing: border-box; width: 86px; height: 15px; border: 1px solid #ddd; border-bottom: 0; padding-left: 9px; gap: 5.500px; font-size: 6.800px; font-weight: 500; color: #444; }
      gpt-icon { color: #4fbb95; }
      .sum { display: flex; align-items: center; justify-content: flex-end; gap: 5px; height: 22px; padding: 4px 9.500px 0 0; font-size: 11.500px; font-weight: 500; line-height: 20px; box-sizing: content-box; }
      .sum > :last-child { font-size: 6.300px; color: #c8c8c8; font-weight: 400; }
      .pos { color: var(--up); } .neg { color: var(--down); }
      mini-chart { margin: -3px 0 0 -1.300px; }`;
  }
  html() {
    const v = this.a('value');
    return `<div class="bar"><div class="tab"><fit-text w="56">${this.a('title')}</fit-text><gpt-icon name="help" size="8"></gpt-icon></div></div>
      <div class="sum"><fit-text w="${this.a('vw')}" class="${v[0] === '+' ? 'pos' : 'neg'}">${v}</fit-text><fit-text w="32.500">2025/04/23</fit-text></div>
      <mini-chart kind="${this.a('kind')}"></mini-chart>`;
  }
}
class MonthTable extends Part {
  css() {
    return `:host { display: grid; grid-template-columns: repeat(7, 1fr); width: 544px; font-size: 6.500px; color: #777; }
      div { height: 17.500px; display: flex; align-items: center; justify-content: center; box-sizing: border-box; }
      .h { background: #d7fcf1; height: 16.200px; color: #666; font-size: 7px; }
      .d { background: #f2f4f8; height: 17px; border-right: 1px solid #f7f8fb; }
      .f { background: #f9fafb; color: #bbb; }
      .v { height: 18.500px; color: #444; font-weight: 500; }
      .w { background: #dcfce3; color: var(--up); border: solid #fff; border-width: 1px 0; font-size: 7.500px; }
      .t { height: 4px; } .t.w { border-width: 1px 1px 0 0; }`;
  }
  html() {
    const cells = (cls, list) => list.map(t => `<div class="${cls}">${t}</div>`).join('');
    return cells('h', [...'日月火水木金土'])
      + cells('d f', ['30', '31']) + cells('d', ['01', '02', '03', '04', '05'])
      + cells('v', ['', '', '0', '0']) + '<div class="v w">+8,800</div>' + cells('v', ['0', '0'])
      + cells('d', ['06', '07', '08', '09', '10', '11', '12'])
      + cells('t', ['', '', '', '']) + cells('t w', ['', '']) + cells('t', ['']);
  }
}
class TradeAnalysis extends Part {
  css() {
    return `
      :host { display: block; box-sizing: border-box; width: 612px; height: 396px; overflow: hidden; padding: 14px 0 0 39px; font-size: 6.800px; color: #555; }
      h2 { margin: 0; font-size: 10px; line-height: 16px; font-weight: 500; }
      p { margin: 0; line-height: 10px; font-size: 6.700px; color: #999; padding-left: .5px; }
      .row { display: flex; align-items: center; height: 18px; margin-top: 11.700px; font-weight: 500; }
      .date { display: flex; align-items: center; box-sizing: border-box; height: 18px; width: 120px; border: 1px solid #ddd; border-radius: 2px; margin: 0 9.500px 0 4px; padding-left: 4.500px; gap: 4px; }
      .date fit-text { font-family: Inter, sans-serif; font-weight: 600; font-size: 6.800px; color: #444; }
      .rng { margin-right: 9.500px; }
      .charts { display: flex; gap: 22.700px; margin-top: 16px; }
      .nav { display: flex; align-items: center; margin: 22px 0 0 208px; height: 19px; color: #333; font-size: 8px; font-weight: 700; }
      .nav b { display: flex; align-items: center; justify-content: center; width: 19px; height: 19px; border-radius: 50%; background: #eee; }
      .nav fit-text { margin: 0 27.500px; }
      .total { display: flex; gap: 2px; justify-content: flex-end; width: 549.500px; line-height: 10px; margin: -3.500px 0 7px; font-size: 7.600px; font-weight: 700; color: #333; }
      .total > :last-child { color: var(--up); font-weight: 500; }
      month-table { margin-left: 7px; }`;
  }
  html() {
    return `
      <h2><fit-text w="57">トレード分析</fit-text></h2>
      <p><fit-text w="396">＊損益はCトレのストラテジーによる確定損益を計算し表示しています（裁量トレード、裁量による決済損益はカウントされません）</fit-text></p>
      <div class="row"><fit-text w="13.500">期間</fit-text>
        <div class="date"><gpt-icon name="cal" size="7.500"></gpt-icon><fit-text w="90.500">2025-01-24 &gt; 2025-04-24</fit-text></div>
        <fit-text class="rng" w="17.500">1ヶ月</fit-text><fit-text class="rng" w="17.500">3ヶ月</fit-text><fit-text class="rng" w="17.500" style="margin-right:11px">6ヶ月</fit-text><fit-text w="12.500">1 年</fit-text></div>
      <div class="charts">
        <profit-panel kind="bars" title="毎日損益（Cトレ）" value="-2,738" vw="32"></profit-panel>
        <profit-panel kind="area" title="累計損益（Cトレ）" value="+110,234" vw="47"></profit-panel></div>
      <div class="nav"><b><gpt-icon name="left" size="7"></gpt-icon></b><fit-text w="48.500">2025 年 04 月</fit-text><b><gpt-icon name="right" size="7"></gpt-icon></b></div>
      <div class="total"><fit-text w="38">04月合計：</fit-text><fit-text w="28">+58,684</fit-text></div>
      <month-table></month-table>`;
  }
}

// ── Page ───────────────────────────────────────────────────────────
class GptPage extends Part {
  css() {
    return `
      :host { display: block; width: 1200px; height: 1095px; overflow: hidden; }
      .app { display: flex; height: 683px; box-sizing: border-box; overflow: hidden; box-shadow: inset 0 1px #ddd; }
      .gutter { width: 6px; background: var(--rule); flex: none; }
      main { width: 748px; flex: none; height: 683px; }
      chart-bar { height: 29px; }
      candle-chart { margin-top: 15.500px; height: 441px; }
      .lower { display: flex; padding-top: 16px; }`;
  }
  html() {
    return `<section class="app"><gpt-sidebar></gpt-sidebar><div class="gutter"></div>
      <main><chart-bar></chart-bar><candle-chart></candle-chart><strategy-list></strategy-list></main>
      <loop-form></loop-form></section>
      <section class="lower"><signal-list></signal-list><trade-analysis></trade-analysis></section>`;
  }
}

Object.entries({
  'fit-text': FitText, 'gpt-whale': GptWhale, 'gpt-icon': GptIcon,
  'nav-item': NavItem, 'nav-heading': NavHeading, 'gpt-sidebar': GptSidebar,
  'candle-chart': CandleChart, 'chart-bar': ChartBar,
  'icon-button': IconButton, 'strategy-list': StrategyList,
  'step-field': StepField, 'loop-form': LoopForm,
  'page-nav': PageNav, 'signal-card': SignalCard, 'signal-list': SignalList,
  'mini-chart': MiniChart, 'profit-panel': ProfitPanel, 'month-table': MonthTable,
  'trade-analysis': TradeAnalysis, 'gpt-page': GptPage,
}).forEach(([tag, cls]) => { if (!customElements.get(tag)) customElements.define(tag, cls); });
</script>
</body>
</html>
